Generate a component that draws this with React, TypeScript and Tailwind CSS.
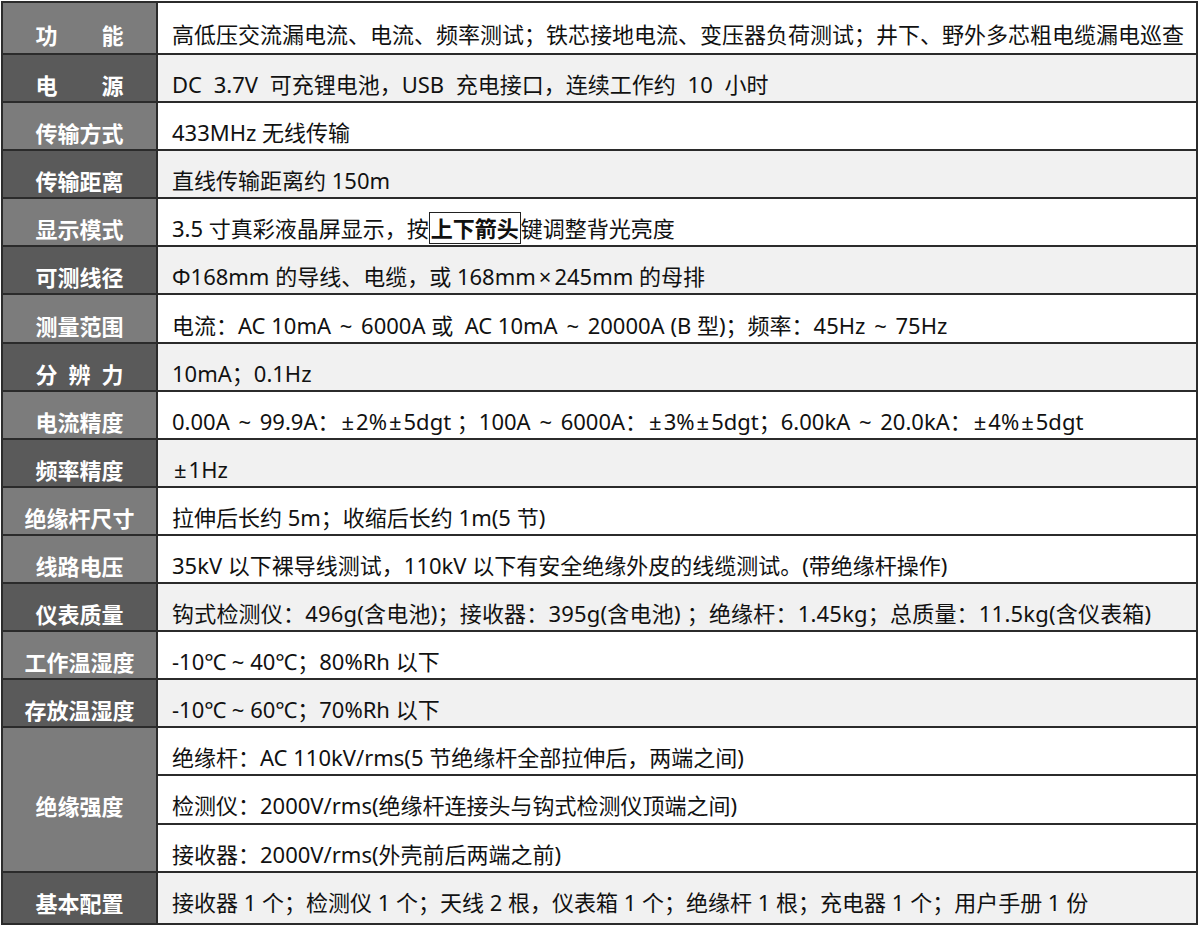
import React from 'react';

type Row = {
  label: string;
  spread?: boolean;
  dark: boolean;
  wide?: boolean;
  cls?: string;
  values: React.ReactNode[];
};

// 参考图里 “~” 和 “±” 两侧留得比较宽
function fmt(text: string) {
  const parts = text.split(/( ~ |±)/);
  return parts.map((p, i) => {
    if (p === ' ~ ') return <span key={i} className="mx-[3px]"> ~ </span>;
    if (p === '±') return <span key={i} className="mx-[2px]">±</span>;
    return <React.Fragment key={i}>{p}</React.Fragment>;
  });
}

const rows: Row[] = [
  {
    label: '功能',
    spread: true,
    dark: false,
    values: ['高低压交流漏电流、电流、频率测试；铁芯接地电流、变压器负荷测试；井下、野外多芯粗电缆漏电巡查'],
  },
  {
    label: '电源',
    spread: true,
    dark: true,
    cls: '[word-spacing:6px]',
    values: ['DC 3.7V 可充锂电池，USB 充电接口，连续工作约 10 小时'],
  },
  { label: '传输方式', dark: false, values: ['433MHz 无线传输'] },
  { label: '传输距离', dark: true, values: ['直线传输距离约 150m'] },
  {
    label: '显示模式',
    dark: false,
    values: [
      <>
        3.5 寸真彩液晶屏显示，按
        <span className="border border-[#222] px-px font-bold">上下箭头</span>
        键调整背光亮度
      </>,
    ],
  },
  {
    label: '可测线径',
    dark: true,
    values: [
      <>
        Φ168mm 的导线、电缆，或 168mm<span className="mx-[3px]">×</span>245mm 的母排
      </>,
    ],
  },
  {
    label: '测量范围',
    dark: false,
    wide: true,
    values: ['电流：AC 10mA ~ 6000A 或  AC 10mA ~ 20000A (B 型)；频率：45Hz ~ 75Hz'],
  },
  { label: '分辨力', spread: true, dark: true, values: ['10mA；0.1Hz'] },
  {
    label: '电流精度',
    dark: false,
    wide: true,
    values: ['0.00A ~ 99.9A：±2%±5dgt ；100A ~ 6000A：±3%±5dgt；6.00kA ~ 20.0kA：±4%±5dgt'],
  },
  { label: '频率精度', dark: true, wide: true, values: ['±1Hz'] },
  { label: '绝缘杆尺寸', dark: false, values: ['拉伸后长约 5m；收缩后长约 1m(5 节)'] },
  { label: '线路电压', dark: false, values: ['35kV 以下裸导线测试，110kV 以下有安全绝缘外皮的线缆测试。(带绝缘杆操作)'] },
  {
    label: '仪表质量',
    dark: true,
    cls: 'tracking-[0.2px]',
    values: ['钩式检测仪：496g(含电池)；接收器：395g(含电池) ；绝缘杆：1.45kg；总质量：11.5kg(含仪表箱)'],
  },
  { label: '工作温湿度', dark: false, values: ['-10℃ ~ 40℃；80%Rh 以下'] },
  { label: '存放温湿度', dark: true, values: ['-10℃ ~ 60℃；70%Rh 以下'] },
  {
    label: '绝缘强度',
    dark: false,
    values: [
      '绝缘杆：AC 110kV/rms(5 节绝缘杆全部拉伸后，两端之间)',
      '检测仪：2000V/rms(绝缘杆连接头与钩式检测仪顶端之间)',
      '接收器：2000V/rms(外壳前后两端之前)',
    ],
  },
  { label: '基本配置', dark: true, values: ['接收器 1 个；检测仪 1 个；天线 2 根，仪表箱 1 个；绝缘杆 1 根；充电器 1 个；用户手册 1 份'] },
];

function Label({ row }: { row: Row }) {
  if (row.spread) {
    return (
      <div className="mx-auto flex w-[88px] justify-between">
        {row.label.split('').map((c, i) => (
          <span key={i}>{c}</span>
        ))}
      </div>
    );
  }
  return <div className="text-center">{row.label}</div>;
}

export default function App() {
  const total = rows.reduce((n, r) => n + r.values.length, 0);
  let line = 0;

  return (
    <div className="min-h-[928px] bg-white pl-px pt-px">
      <table className="w-[1197px] table-fixed border-collapse border-2 border-[#2b2b2b] font-['Noto_Sans','Noto_Sans_CJK_SC',sans-serif]">
        <colgroup>
          <col className="w-[155px]" />
          <col />
        </colgroup>
        <tbody>
          {rows.map((row, ri) =>
            row.values.map((v, vi) => {
              const idx = line++;
              const first = idx === 0;
              const last = idx === total - 1;
              return (
                <tr key={`${ri}-${vi}`} className={first || last ? 'h-[52px]' : 'h-[48.1px]'}>
                  {vi === 0 && (
                    <td
                      rowSpan={row.values.length}
                      className={`border-2 border-[#2b2b2b] px-0 pb-0 align-middle text-[22px] font-bold leading-none text-white font-['Noto_Sans_CJK_SC',sans-serif] ${
                        last ? 'pt-2' : 'pt-3'
                      } ${row.dark ? 'bg-[#5a5a5a]' : 'bg-[#7c7c7c]'}`}
                    >
                      <Label row={row} />
                    </td>
                  )}
                  <td
                    className={`border-2 border-[#2b2b2b] px-[14px] pb-0 align-middle text-[22px] leading-none whitespace-pre text-[#111] ${
                      last ? 'pt-2' : 'pt-3'
                    } ${row.dark ? 'bg-[#f1f1f1]' : 'bg-white'} ${row.cls ?? ''}`}
                  >
                    {row.wide && typeof v === 'string' ? fmt(v) : v}
                  </td>
                </tr>
              );
            })
          )}
        </tbody>
      </table>
    </div>
  );
}
